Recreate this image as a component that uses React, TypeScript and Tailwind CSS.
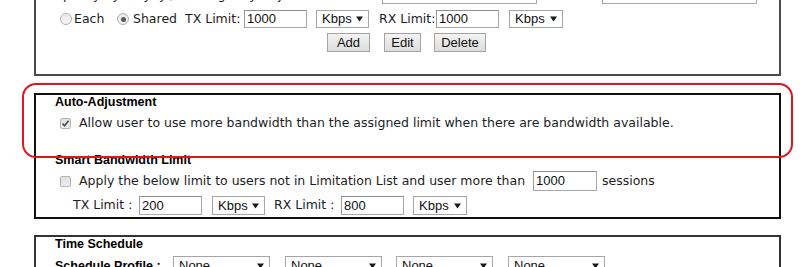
const verdana = "font-['DejaVu_Sans',Verdana,sans-serif]";
const arial = "font-['Liberation_Sans',Arial,sans-serif]";

const Arrow = () => (
  <svg width="7" height="6" viewBox="0 0 7 6" className="shrink-0">
    <path d="M0 0.5 H7 L3.5 5.5 Z" fill="#1a1a1a" />
  </svg>
);

const Select = ({ className, label }: { className: string; label: string }) => (
  <div
    className={`flex items-center justify-between border border-[#a6a6a6] bg-white pl-[5px] pr-[5px] text-[13px] text-[#111] ${arial} ${className}`}
  >
    <span>{label}</span>
    <Arrow />
  </div>
);

const TextBox = ({ className, value }: { className: string; value: string }) => (
  <div
    className={`flex items-center border border-[#a9a9a9] border-t-[#8e8e8e] border-l-[#9a9a9a] bg-white pl-[2px] text-[13px] text-[#111] ${arial} ${className}`}
  >
    {value}
  </div>
);

const Radio = ({ checked }: { checked?: boolean }) => (
  <span className="flex h-[12px] w-[12px] shrink-0 items-center justify-center rounded-full border border-[#b3b3b3] bg-gradient-to-b from-[#e9e9e9] to-[#f6f6f6]">
    {checked && <span className="h-[5px] w-[5px] rounded-full bg-[#5a5a5a]" />}
  </span>
);

const Check = ({ checked }: { checked?: boolean }) => (
  <span className="flex h-[11px] w-[11px] shrink-0 items-center justify-center rounded-[2px] border border-[#b5b5b5] bg-gradient-to-b from-[#e2e2e2] to-[#ececec]">
    {checked && (
      <svg width="9" height="9" viewBox="0 0 9 9">
        <path d="M1.5 4.6 L3.6 6.8 L7.6 1.8" fill="none" stroke="#4d4d4d" strokeWidth="1.6" />
      </svg>
    )}
  </span>
);

const Button = ({ className, label }: { className: string; label: string }) => (
  <div
    className={`flex h-[19px] items-center justify-center border border-[#a3a3a3] bg-gradient-to-b from-[#f3f3f3] to-[#dddddd] text-[13px] text-[#111] ${arial} ${className}`}
  >
    {label}
  </div>
);

export default function App() {
  return (
    <div className={`relative h-[267px] w-[800px] overflow-hidden bg-white text-[#1c1c24] ${verdana}`}>
      {/* limitation list panel, cut at the top */}
      <div className="-mt-[30px] ml-[34px] h-[106px] w-[747px] border-2 border-[#4a4a4a] pt-[14px]">
        <div className="flex h-[18px] items-center pl-[19px] text-[12.5px] whitespace-nowrap">
          <span className="w-[327px]">Specify by: Any, y / IP Range, by Obj</span>
          <TextBox className="h-[18px] w-[155px]" value="" />
          <span className="w-[65px]" />
          <TextBox className="h-[18px] w-[155px]" value="" />
        </div>
        <div className="mt-[6px] flex h-[18px] items-center pl-[24px] text-[12.5px] whitespace-nowrap">
          <Radio />
          <span className="ml-[2px] w-[43px]">Each</span>
          <Radio checked />
          <span className="ml-[4px] w-[52px]">Shared</span>
          <span className="w-[59px]">TX Limit:</span>
          <TextBox className="h-[18px] w-[63px]" value="1000" />
          <Select className="ml-[9px] h-[18px] w-[53px]" label="Kbps" />
          <span className="ml-[10px] w-[57px]">RX Limit:</span>
          <TextBox className="h-[18px] w-[63px]" value="1000" />
          <Select className="ml-[10px] h-[18px] w-[54px]" label="Kbps" />
        </div>
        <div className="mt-[5px] flex pl-[291px]">
          <Button className="w-[43px]" label="Add" />
          <Button className="ml-[14px] w-[37px]" label="Edit" />
          <Button className="ml-[13px] w-[52px]" label="Delete" />
        </div>
      </div>

      {/* auto adjustment + smart bandwidth panel */}
      <div className="mt-[17px] ml-[34px] h-[126px] w-[747px] border-2 border-[#111]">
        <div className={`pl-[19px] text-[12.5px] leading-[15px] font-bold text-black ${arial}`}>Auto-Adjustment</div>
        <div className="mt-[3px] flex h-[20px] items-center pl-[24px] text-[12.5px] whitespace-nowrap">
          <Check checked />
          <span className="ml-[8px]">
            Allow user to use more bandwidth than the assigned limit when there are bandwidth available.
          </span>
        </div>
        <div className={`mt-[20px] pl-[19px] text-[12.5px] leading-[15px] font-bold text-black ${arial}`}>
          Smart Bandwidth Limit
        </div>
        <div className="mt-[3px] flex h-[20px] items-center pl-[24px] text-[12.5px] whitespace-nowrap">
          <Check />
          <span className="ml-[8px] w-[454px]">
            Apply the below limit to users not in Limitation List and user more than
          </span>
          <TextBox className="h-[20px] w-[64px]" value="1000" />
          <span className="ml-[5px]">sessions</span>
        </div>
        <div className="mt-[5px] flex h-[19px] items-center pl-[37px] text-[12.5px] whitespace-nowrap">
          <span className="w-[66px]">TX Limit :</span>
          <TextBox className="h-[19px] w-[63px]" value="200" />
          <Select className="ml-[10px] h-[19px] w-[53px]" label="Kbps" />
          <span className="ml-[9px] w-[67px]">RX Limit :</span>
          <TextBox className="h-[19px] w-[63px]" value="800" />
          <Select className="ml-[9px] h-[19px] w-[54px]" label="Kbps" />
        </div>
      </div>

      {/* time schedule panel, cut at the bottom */}
      <div className="mt-[16px] ml-[34px] h-[60px] w-[747px] border-2 border-[#333]">
        <div className={`pl-[19px] text-[12.5px] leading-[15px] font-bold text-black ${arial}`}>Time Schedule</div>
        <div className="mt-[4px] flex h-[20px] items-center pl-[19px] whitespace-nowrap">
          <span className={`w-[118px] text-[12.5px] font-bold text-black ${arial}`}>Schedule Profile :</span>
          <Select className="h-[20px] w-[97px]" label="None" />
          <Select className="ml-[15px] h-[20px] w-[97px]" label="None" />
          <Select className="ml-[14px] h-[20px] w-[97px]" label="None" />
          <Select className="ml-[15px] h-[20px] w-[97px]" label="None" />
        </div>
      </div>

      {/* red annotation */}
      <div className="absolute top-[83px] left-[22px] h-[75px] w-[771px] rounded-[14px] border-2 border-[#e5131b]" />
    </div>
  );
}
